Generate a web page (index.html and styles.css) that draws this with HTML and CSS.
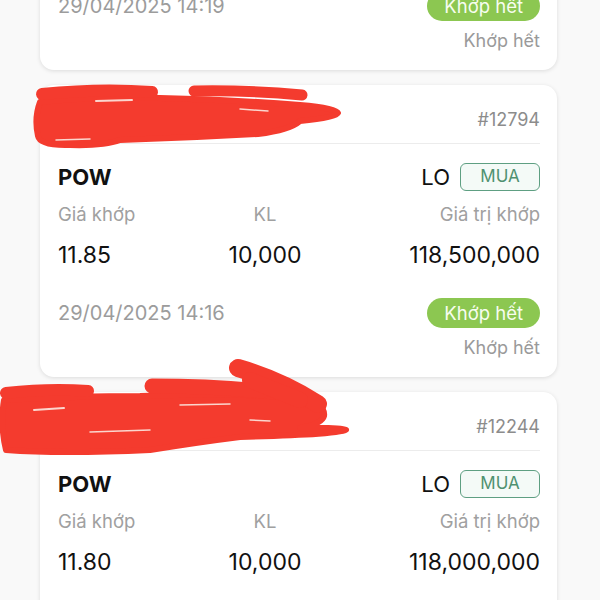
FILE: index.html
```html
<!DOCTYPE html>
<html lang="vi">
<head>
    <meta charset="UTF-8">
    <meta name="viewport" content="width=device-width, initial-scale=1.0">
    <title>Sổ lệnh</title>
    <link rel="stylesheet" href="styles.css">
</head>
<body>
    <div class="orders">
        <!-- order 1 (scrolled mostly out of view) -->
        <div class="card">
            <div class="card-head">
                <span class="account"></span>
                <span class="code">#12801</span>
            </div>
            <div class="card-title">
                <span class="symbol">POW</span>
                <div class="type">LO <span class="side">MUA</span></div>
            </div>
            <div class="stats">
                <span class="label">Giá khớp</span>
                <span class="label mid">KL</span>
                <span class="label end">Giá trị khớp</span>
                <span class="value">11.85</span>
                <span class="value mid">10,000</span>
                <span class="value end">118,500,000</span>
            </div>
            <div class="card-foot">
                <span class="time">29/04/2025 14:19</span>
                <span class="status-pill">Khớp hết</span>
            </div>
            <div class="status-text">Khớp hết</div>
        </div>

        <div class="card">
            <div class="card-head">
                <span class="account"></span>
                <span class="code">#12794</span>
            </div>
            <div class="card-title">
                <span class="symbol">POW</span>
                <div class="type">LO <span class="side">MUA</span></div>
            </div>
            <div class="stats">
                <span class="label">Giá khớp</span>
                <span class="label mid">KL</span>
                <span class="label end">Giá trị khớp</span>
                <span class="value">11.85</span>
                <span class="value mid">10,000</span>
                <span class="value end">118,500,000</span>
            </div>
            <div class="card-foot">
                <span class="time">29/04/2025 14:16</span>
                <span class="status-pill">Khớp hết</span>
            </div>
            <div class="status-text">Khớp hết</div>
        </div>

        <div class="card">
            <div class="card-head">
                <span class="account"></span>
                <span class="code">#12244</span>
            </div>
            <div class="card-title">
                <span class="symbol">POW</span>
                <div class="type">LO <span class="side">MUA</span></div>
            </div>
            <div class="stats">
                <span class="label">Giá khớp</span>
                <span class="label mid">KL</span>
                <span class="label end">Giá trị khớp</span>
                <span class="value">11.80</span>
                <span class="value mid">10,000</span>
                <span class="value end">118,000,000</span>
            </div>
            <div class="card-foot">
                <span class="time">29/04/2025 14:0</span>
                <span class="status-pill">Khớp hết</span>
            </div>
            <div class="status-text">Khớp hết</div>
        </div>
    </div>

    <!-- red marker scribbles drawn over the account names -->
    <svg class="scribble" width="600" height="600" viewBox="0 0 600 600">
        <g fill="#f43b2e" stroke="#f43b2e" stroke-linecap="round" stroke-linejoin="round">
            <path d="M40 102 Q100 96 160 98 Q240 100 300 105 Q336 108 338 113 Q336 118 300 121 Q290 130 258 134 Q190 138 120 140 Q104 146 70 145 Q40 146 38 136 Q34 118 40 102 Z" stroke-width="6"/>
            <path d="M42 94 Q100 88 152 92" stroke-width="12" fill="none"/>
            <path d="M194 91 Q250 90 302 95" stroke-width="11" fill="none"/>

            <path d="M4 400 Q80 396 140 396 Q230 392 300 398 Q326 404 324 416 Q322 424 300 428 Q340 427 346 430 Q344 434 240 437 Q200 442 150 450 Q60 454 6 450 Q0 425 4 400 Z" stroke-width="6"/>
            <path d="M6 393 Q50 388 88 391" stroke-width="12" fill="none"/>
            <path d="M152 386 Q210 386 262 391" stroke-width="15" fill="none"/>
            <path d="M238 368 Q280 380 318 404" stroke-width="18" fill="none"/>
            <path d="M250 380 L300 400" stroke-width="16" fill="none"/>
        </g>
        <g stroke="#fbd6ce" stroke-linecap="round" fill="none">
            <path d="M96 101 L132 100" stroke-width="2"/>
            <path d="M240 109 L268 111" stroke-width="1.5"/>
            <path d="M56 140 L90 139" stroke-width="1.5"/>
            <path d="M34 410 L64 408" stroke-width="2"/>
            <path d="M180 405 L230 404" stroke-width="1.5"/>
            <path d="M90 432 L150 430" stroke-width="1.5"/>
            <path d="M250 420 L270 421" stroke-width="1.5"/>
        </g>
    </svg>
</body>
</html>
```

FILE: styles.css
```css
* {
    margin: 0;
    padding: 0;
    box-sizing: border-box;
    font-family: Inter, "Noto Sans", sans-serif;
}

body {
    background: #f9f9f9;
    height: 600px;
    overflow: hidden;
    color: #111;
}

.orders {
    margin-top: -222px;
    padding: 0 43px 0 40px;
}

.card {
    background: #fff;
    border-radius: 14px;
    box-shadow: 0 1px 4px rgba(0, 0, 0, 0.12);
    padding: 0 17px 17px 18px;
    margin-bottom: 15px;
}

.card-head {
    display: flex;
    justify-content: space-between;
    padding: 24px 0 12px;
    line-height: 22px;
    border-bottom: 1px solid #ececec;
}

.code {
    color: #8c8c8c;
    font-size: 18px;
}

.card-title {
    display: flex;
    justify-content: space-between;
    align-items: center;
    height: 28px;
    margin-top: 19px;
}

.symbol {
    font-size: 22px;
    font-weight: 700;
}

.type {
    display: flex;
    align-items: center;
    gap: 10px;
    font-size: 22px;
}

.side {
    width: 80px;
    height: 28px;
    line-height: 25px;
    text-align: center;
    font-size: 17px;
    color: #4f9170;
    background: #f4faf7;
    border: 1.5px solid #5e9f82;
    border-radius: 6px;
}

.stats {
    display: grid;
    grid-template-columns: 150px 114px 1fr;
    row-gap: 15px;
    margin-top: 11px;
}

.label {
    color: #a0a0a0;
    font-size: 18.5px;
    line-height: 24px;
}

.value {
    font-size: 23px;
    line-height: 28px;
}

.mid {
    text-align: center;
}

.end {
    text-align: right;
}

.card-foot {
    display: flex;
    justify-content: space-between;
    align-items: center;
    margin-top: 29px;
}

.time {
    color: #9c9c9c;
    font-size: 20px;
}

.status-pill {
    height: 30px;
    line-height: 30px;
    padding: 0 17px;
    border-radius: 15px;
    background: #8cc751;
    color: #f7fdef;
    font-size: 18.5px;
}

.status-text {
    margin-top: 8px;
    text-align: right;
    color: #9a9a9a;
    font-size: 18px;
    line-height: 24px;
}

.scribble {
    position: absolute;
    top: 0;
    left: 0;
    pointer-events: none;
}
```
